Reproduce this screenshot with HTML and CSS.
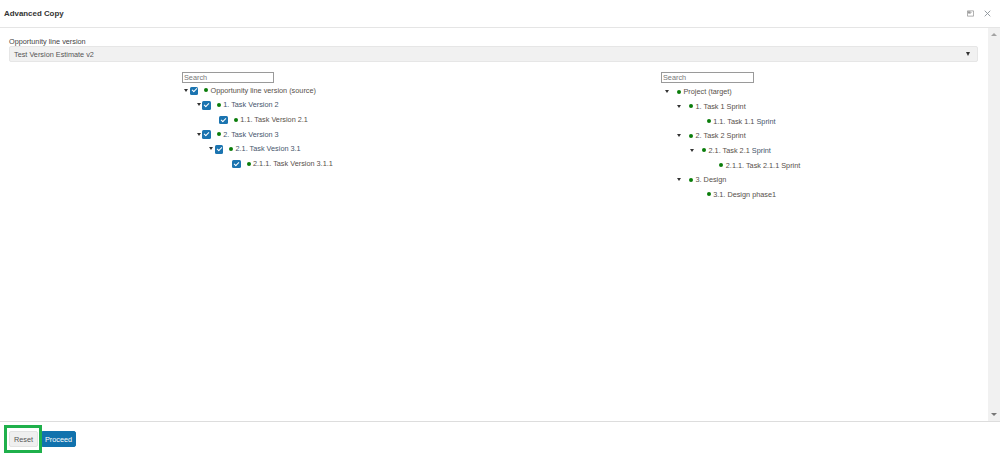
FILE: index.html
```html
<!DOCTYPE html>
<html lang="en">
<head>
<meta charset="utf-8">
<title>Advanced Copy</title>
<link rel="stylesheet" href="styles.css">
</head>
<body>
<div class="dialog">
  <header class="head">
    <h1 class="title">Advanced Copy</h1>
    <div class="head-icons">
      <svg class="ico" viewBox="0 0 8 7" aria-hidden="true"><path d="M.5.5h7v6h-7z" fill="none" stroke="#8a8a8a" stroke-width=".8"/><path d="M1 1h3v2.5H1z" fill="#9a9a9a"/><path d="M5 2 3.5 3.5" stroke="#666" stroke-width=".7"/></svg>
      <svg class="ico" viewBox="0 0 7 7" aria-hidden="true"><path d="M.7.7l5.6 5.6M6.3.7.7 6.3" fill="none" stroke="#8b9299" stroke-width=".9"/></svg>
    </div>
  </header>
  <div class="body">
    <main class="content">
      <label class="field-label">Opportunity line version</label>
      <div class="select"><span>Test Version Estimate v2</span><i class="select-arrow"></i></div>
      <div class="trees">
        <section class="tree-col">
          <input class="search" placeholder="Search">
          <div class="tree">
            <div class="row"><i class="tw"></i><i class="cb"></i><i class="dot"></i><span class="brown">Opportunity line version (source)</span></div>
            <div class="row l1"><i class="tw"></i><i class="cb"></i><i class="dot"></i><span class="blue">1. Task Version 2</span></div>
            <div class="row l2 leaf"><i class="cb"></i><i class="dot"></i><span class="brown">1.1. Task Version 2.1</span></div>
            <div class="row l1"><i class="tw"></i><i class="cb"></i><i class="dot"></i><span class="blue">2. Task Version 3</span></div>
            <div class="row l2"><i class="tw"></i><i class="cb"></i><i class="dot"></i><span class="blue">2.1. Task Vesion 3.1</span></div>
            <div class="row l3 leaf"><i class="cb"></i><i class="dot"></i><span class="brown">2.1.1. Task Version 3.1.1</span></div>
          </div>
        </section>
        <section class="tree-col target">
          <input class="search" placeholder="Search">
          <div class="tree">
            <div class="row"><i class="tw"></i><i class="dot"></i><span class="brown">Project (target)</span></div>
            <div class="row l1"><i class="tw"></i><i class="dot"></i><span class="brown">1. Task 1 Sprint</span></div>
            <div class="row l2 leaf"><i class="dot"></i><span class="brown">1.1. Task 1.1 <span class="blue">Sprint</span></span></div>
            <div class="row l1"><i class="tw"></i><i class="dot"></i><span class="brown">2. Task 2 Sprint</span></div>
            <div class="row l2"><i class="tw"></i><i class="dot"></i><span class="brown">2.1. Task 2.1 <span class="blue">Sprint</span></span></div>
            <div class="row l3 leaf"><i class="dot"></i><span class="brown">2.1.1. Task 2.1.1 Sprint</span></div>
            <div class="row l1"><i class="tw"></i><i class="dot"></i><span class="brown">3. Design</span></div>
            <div class="row l2 leaf"><i class="dot"></i><span class="brown">3.1. Design phase1</span></div>
          </div>
        </section>
      </div>
    </main>
    <div class="scrollbar"><i class="sb-up"></i><i class="sb-down"></i></div>
  </div>
  <footer class="foot">
    <div class="reset-wrap"><button class="btn reset">Reset</button><span class="highlight"></span></div>
    <button class="btn proceed">Proceed</button>
  </footer>
</div>
</body>
</html>
```
FILE: styles.css
```css
html, body { margin: 0; padding: 0; background: #fff; }
body { font-family: "Liberation Sans", Arial, sans-serif; font-size: 7.3px; color: #444; }
.dialog { width: 1000px; height: 455px; display: flex; flex-direction: column; overflow: hidden; }
.head { height: 27px; flex: none; display: flex; align-items: center; justify-content: space-between; padding: 0 9px 0 4px; border-bottom: 1px solid #e5e5e5; }
.title { margin: 0; font-size: 7.9px; font-weight: bold; color: #333; }
.head-icons { display: flex; gap: 10px; align-items: center; }
.ico { width: 7px; height: 7px; display: block; }
.body { flex: 1; display: flex; min-height: 0; border-bottom: 1px solid #ddd; }
.content { flex: 1; padding: 10px 10px 0 9px; }
.field-label { display: block; line-height: 8px; color: #444; }
.select { height: 14px; background: #f1f1f1; border: 1px solid #e6e6e6; border-radius: 2px; display: flex; align-items: center; justify-content: space-between; padding: 0 3px 0 4px; color: #555; }
.select-arrow { width: 0; height: 0; border: 2.5px solid transparent; border-top: 4px solid #333; border-bottom: 0; margin-right: 4px; }
.trees { display: grid; grid-template-columns: 479px 1fr; margin-top: 10px; }
.tree-col { padding-left: 173px; }
.search { display: block; box-sizing: border-box; width: 92px; height: 11px; margin: 0; padding: 0 1px; border: 1px solid #9a9a9a; font: inherit; color: #444; outline: 0; }
.target .search { width: 93px; }
.search::placeholder { color: #777; opacity: 1; }
.tree { margin-top: 0; }
.target .tree { margin-top: 1.5px; }
.row { height: 14.65px; display: flex; align-items: center; white-space: nowrap; padding-left: 2px; }
.row.l1 { padding-left: 14.7px; }
.row.l2 { padding-left: 27px; }
.row.l3 { padding-left: 39.5px; }
.row.leaf.l2 { padding-left: 37.3px; }
.row.leaf.l3 { padding-left: 50px; }
.tw { width: 0; height: 0; border: 2.25px solid transparent; border-top: 3.5px solid #333; border-bottom: 0; margin-right: 1.5px; }
.cb { width: 8.5px; height: 8.5px; border-radius: 1.5px; background: #1b74b0; position: relative; margin-right: 6px; top: .5px; }
.cb::after { content: ""; position: absolute; left: 2.2px; top: 1.8px; width: 4px; height: 2px; border-left: 1px solid #fff; border-bottom: 1px solid #fff; transform: rotate(-45deg); }
.dot { width: 4px; height: 4px; border-radius: 50%; background: #0a7d0a; margin-right: 2.5px; }
.target .tw { margin-right: 8px; }
.target .row { padding-left: 4px; }
.target .row.l1 { padding-left: 16px; }
.target .row.l2 { padding-left: 29px; }
.target .row.leaf.l2 { padding-left: 45.7px; }
.target .row.leaf.l3 { padding-left: 58.3px; }
.brown { color: #57504a; }
.blue { color: #45566c; }
.scrollbar { width: 12px; flex: none; background: #f1f1f1; display: flex; flex-direction: column; justify-content: space-between; align-items: center; padding: 5px 0; box-sizing: border-box; }
.sb-up { width: 0; height: 0; border: 3px solid transparent; border-bottom: 3px solid #a3a3a3; border-top: 0; }
.sb-down { width: 0; height: 0; border: 3px solid transparent; border-top: 3px solid #777; border-bottom: 0; }
.foot { height: 33px; flex: none; display: flex; align-items: flex-start; gap: 3px; padding: 9px 0 0 9px; box-sizing: border-box; }
.reset-wrap { position: relative; display: flex; }
.btn { height: 16px; border-radius: 2px; padding: 0; font: inherit; }
.reset { width: 29px; background: #efefef; border: 1px solid #e2e2e2; color: #555; }
.proceed { width: 35px; background: #1172ad; border: 1px solid #1172ad; color: #fff; }
.highlight { position: absolute; left: -5.5px; top: -6px; width: 32px; height: 22px; border: 3px solid #1fb04b; pointer-events: none; }
```
